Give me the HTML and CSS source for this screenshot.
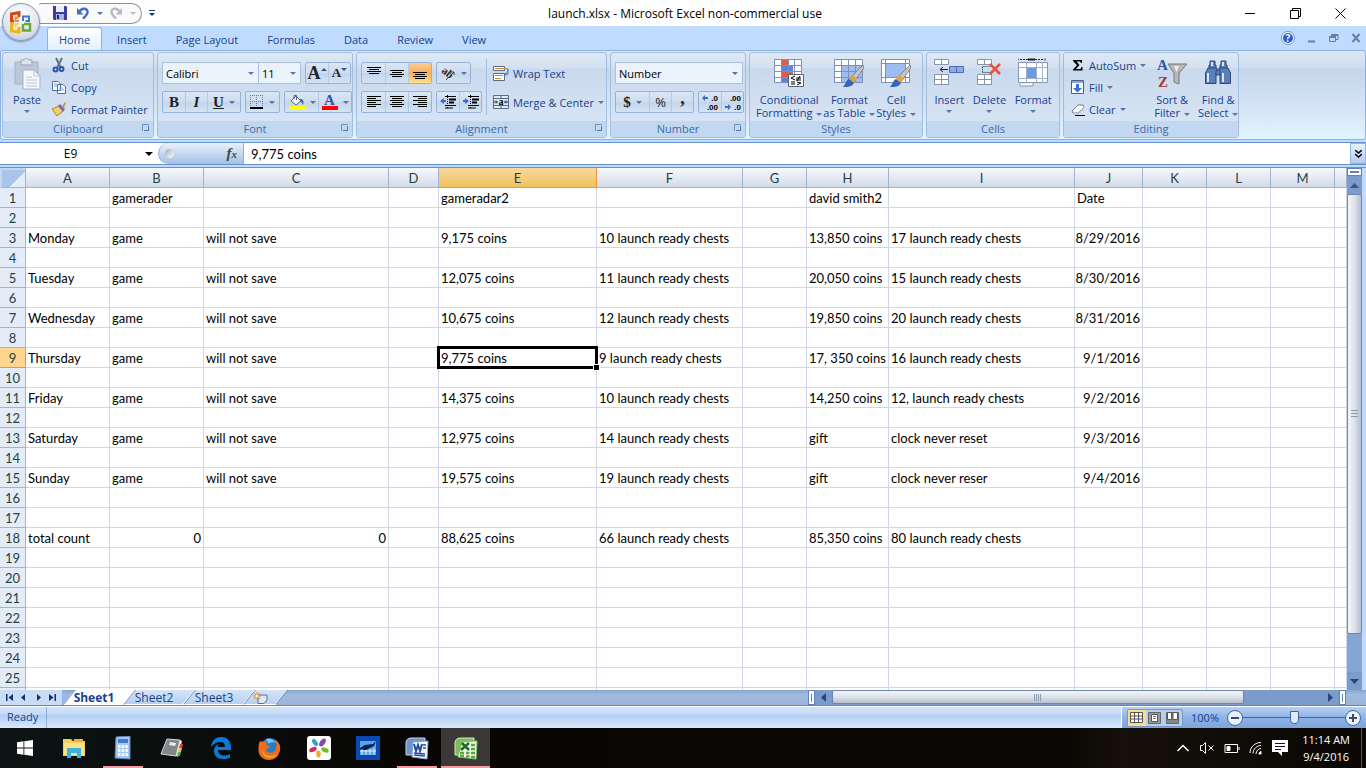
FILE: index.html
```html
<!DOCTYPE html>
<html lang="en">
<head>
	<meta charset="UTF-8">
	<meta name="viewport" content="width=device-width, initial-scale=1.0">
	<title>launch.xlsx - Microsoft Excel non-commercial use</title>
	<link rel="stylesheet" href="styles.css">
</head>
<body>
	<header class="title-bar">
		<button class="office-btn" aria-label="Office Button">
			<svg width="26" height="26" viewBox="0 0 26 26" fill="none" stroke-width="3">
				<path d="M6 12H3.500V5L11 3.500V8" stroke="#d2461a"/>
				<path d="M11 12H7.500V8.500H11" stroke="#e8902c" stroke-width="2"/>
				<path d="M15 12V7.500H21V12H17.500" stroke="#3c7cc8" stroke-width="2"/>
				<path d="M6 15H3.500V22L11 23V18" stroke="#f0b41c"/>
				<path d="M10.500 15H7.500V18" stroke="#f6d052" stroke-width="2"/>
				<path d="M15 15V21.500H22V15H16" stroke="#6aa83c" stroke-width="2.500"/>
			</svg>
		</button>
		<div class="quick-bar">
			<button aria-label="Save"><svg width="14" height="14" viewBox="0 0 14 14"><path d="M0 0H13L14 1V14H1L0 13Z" fill="#3c3ca0"/><path d="M3 0H11V6H3Z" fill="#e8eefa"/><path d="M3 8H11V14H3Z" fill="#a8b4dc"/><path d="M4 9H6V13H4Z" fill="#23236e"/></svg></button>
			<button aria-label="Undo"><svg width="14" height="14" viewBox="0 0 14 14" fill="none"><path d="M3 6C6 1 12 2 11.500 6.500C11.300 9 9 10.500 7 12.500" stroke="#3f6fc4" stroke-width="2.500"/><path d="M1 2V8.500H7.500Z" fill="#3f6fc4"/></svg><i class="caret"></i></button>
			<button aria-label="Redo"><svg width="14" height="14" viewBox="0 0 14 14" fill="none"><path d="M11 6C8 1 2 2 2.500 6.500C2.700 9 5 10.500 7 12.500" stroke="#b4bac6" stroke-width="2.500"/><path d="M13 2V8.500H6.500Z" fill="#b4bac6"/></svg><i class="caret caret-off"></i></button>
		</div>
		<button class="quick-more" aria-label="Customize Quick Access Toolbar"><i class="caret"></i></button>
		<h1>launch.xlsx - Microsoft Excel non-commercial use</h1>
		<div class="win-btns">
			<button aria-label="Minimize"><svg width="11" height="11" viewBox="0 0 11 11"><path d="M0 5.500H10" stroke="#000"/></svg></button>
			<button aria-label="Restore"><svg width="11" height="11" viewBox="0 0 11 11" fill="none" stroke="#000"><path d="M.5 2.500H8.500V10.500H.5ZM2.500 2.500V.5H10.500V8.500H8.500"/></svg></button>
			<button aria-label="Close"><svg width="11" height="11" viewBox="0 0 11 11" fill="none" stroke="#000"><path d="M.5 .5L10.500 10.500M10.500 .5L.5 10.500"/></svg></button>
		</div>
	</header>

	<nav class="tabs">
		<button class="tab tab-on">Home</button>
		<button class="tab">Insert</button>
		<button class="tab">Page Layout</button>
		<button class="tab">Formulas</button>
		<button class="tab">Data</button>
		<button class="tab">Review</button>
		<button class="tab">View</button>
		<div class="doc-btns">
			<button aria-label="Help"><svg width="14" height="14" viewBox="0 0 14 14"><circle cx="7" cy="7" r="6.500" fill="#fff" stroke="#6d94cf"/><circle cx="7" cy="7" r="5" fill="#2660c8"/><text x="7" y="11" text-anchor="middle" font-family="Open Sans, sans-serif" font-size="10" font-weight="bold" fill="#fff">?</text></svg></button>
			<button aria-label="Minimize window"><svg width="10" height="10" viewBox="0 0 10 10"><path d="M1 8.500H8" stroke="#6a7d9c" stroke-width="2"/></svg></button>
			<button aria-label="Restore window"><svg width="10" height="10" viewBox="0 0 10 10" fill="none" stroke="#6a7d9c"><path d="M.5 3.500H6.500V8.500H.5ZM2.500 3V1.500H9V6.500H7"/><path d="M.5 4H6.500M2.500 2H9" stroke-width="2"/></svg></button>
			<button aria-label="Close window"><svg width="10" height="10" viewBox="0 0 10 10"><path d="M1.500 1L8.500 9M8.500 1L1.500 9" stroke="#6a7d9c" stroke-width="2"/></svg></button>
		</div>
	</nav>

	<section class="ribbon">
		<div class="group group-clipboard">
			<div class="group-body">
				<button class="big">
					<svg width="27" height="32" viewBox="0 0 27 32"><path d="M1 4H24V26H1Z" fill="#bcc8d8" stroke="#a5b2c6"/><path d="M7 2H10C10 0 15 0 15 2H18V7H7Z" fill="#dde4ee" stroke="#94a3ba"/><path d="M9 12H20L26 18V31H9Z" fill="#f4f7fb" stroke="#a5b2c6"/><path d="M20 12V18H26M12 19H18M12 22H23M12 25H23M12 28H23" fill="none" stroke="#b9c4d6"/></svg>
					<span>Paste</span><i class="caret"></i>
				</button>
				<div class="stack">
					<button class="small"><svg width="16" height="16" viewBox="0 0 16 16" fill="none"><path d="M5 1L10 11M11 1L6 11" stroke="#62738f" stroke-width="2"/><circle cx="4.500" cy="12.500" r="2" stroke="#2b57a5" stroke-width="2"/><circle cx="10.500" cy="12" r="2" stroke="#2b57a5" stroke-width="2"/></svg>Cut</button>
					<button class="small"><svg width="16" height="16" viewBox="0 0 16 16" fill="#fff" stroke="#4a6fa8"><path d="M1.500 2.500H7L9.500 5V11.500H1.500ZM6.500 5.500H12L14.500 8V14.500H6.500Z"/><path d="M3 5H6M3 7H6M8 9H12M8 11H13" stroke="#7ea0d6"/></svg>Copy</button>
					<button class="small"><svg width="16" height="16" viewBox="0 0 16 16"><path d="M1 8L8 5L12 10L6 15Z" fill="#f3cf66" stroke="#a78432"/><path d="M7 5L9 3L14 8L12 11Z" fill="#7d6cae"/><path d="M11 5L14 1L15 2L13 7Z" fill="#c79b45"/></svg>Format Painter</button>
				</div>
			</div>
			<h2>Clipboard<i class="launcher"></i></h2>
		</div>

		<div class="group group-font">
			<div class="group-body rows">
				<div class="row">
					<div class="combo">
						<select class="sel sel-font" aria-label="Font"><option>Calibri</option></select>
						<select class="sel sel-size" aria-label="Font size"><option>11</option></select>
					</div>
					<div class="set">
						<button aria-label="Grow font"><b class="glyph glyph-l">A</b><svg width="6" height="14" viewBox="0 0 6 14"><path d="M0 5L3 2L6 5Z" fill="#2f5597"/></svg></button>
						<button aria-label="Shrink font"><b class="glyph glyph-s">A</b><svg width="6" height="14" viewBox="0 0 6 14"><path d="M0 2L3 5L6 2Z" fill="#2f5597"/></svg></button>
					</div>
				</div>
				<div class="row">
					<div class="set">
						<button aria-label="Bold"><b class="glyph">B</b></button>
						<button aria-label="Italic"><b class="glyph glyph-i">I</b></button>
						<button class="wide" aria-label="Underline"><b class="glyph glyph-u">U</b><i class="caret"></i></button>
					</div>
					<div class="set">
						<button class="wide" aria-label="Borders"><svg width="14" height="14" viewBox="0 0 14 14" fill="none" stroke="#6e7a92"><path d="M.5 0V12M12.500 0V12M6.500 0V12M0 .5H13M0 6.500H13" stroke-dasharray="1 1"/><path d="M0 13H13" stroke="#000" stroke-width="2"/></svg><i class="caret"></i></button>
					</div>
					<div class="set">
						<button class="wide" aria-label="Fill color"><svg width="17" height="16" viewBox="0 0 17 16"><path d="M3 7L8 2L13 7L8 11Z" fill="#eef3fa" stroke="#52658a"/><path d="M6 5V1.500H8.500V6" fill="none" stroke="#52658a"/><path d="M12 5C15 5 16 7 15 11L13 7Z" fill="#2b57a5"/><path d="M1 12H17V16H1Z" fill="#ff0"/></svg><i class="caret"></i></button>
						<button class="wide" aria-label="Font color"><span class="font-color">A</span><i class="caret"></i></button>
					</div>
				</div>
			</div>
			<h2>Font<i class="launcher"></i></h2>
		</div>

		<div class="group group-align">
			<div class="group-body">
				<div class="rows">
					<div class="row">
						<div class="set">
							<button aria-label="Top align"><svg width="14" height="14" viewBox="0 0 14 14" stroke="#000"><path d="M0 1.500H14M2 3.500H12M0 5.500H14M2 7.500H12"/></svg></button>
							<button aria-label="Middle align"><svg width="14" height="14" viewBox="0 0 14 14" stroke="#000"><path d="M0 4.500H14M2 6.500H12M0 8.500H14M2 10.500H12"/></svg></button>
							<button class="on" aria-label="Bottom align"><svg width="14" height="14" viewBox="0 0 14 14" stroke="#000"><path d="M0 6.500H14M2 8.500H12M0 10.500H14M2 12.500H12"/></svg></button>
						</div>
						<div class="set">
							<button class="wide" aria-label="Orientation"><svg width="16" height="16" viewBox="0 0 16 16"><text x="1" y="9" transform="rotate(40 4 8)" font-family="Liberation Serif, serif" font-size="11" font-weight="bold" fill="#222">ab</text><path d="M6 15L14 7M14 10V7H11" fill="none" stroke="#444"/></svg><i class="caret"></i></button>
						</div>
					</div>
					<div class="row">
						<div class="set">
							<button aria-label="Align left"><svg width="14" height="14" viewBox="0 0 14 14" stroke="#000"><path d="M0 1.500H14M0 3.500H9M0 5.500H14M0 7.500H9M0 9.500H14M0 11.500H9"/></svg></button>
							<button aria-label="Center"><svg width="14" height="14" viewBox="0 0 14 14" stroke="#000"><path d="M0 1.500H14M2 3.500H12M0 5.500H14M2 7.500H12M0 9.500H14M2 11.500H12"/></svg></button>
							<button aria-label="Align right"><svg width="14" height="14" viewBox="0 0 14 14" stroke="#000"><path d="M0 1.500H14M5 3.500H14M0 5.500H14M5 7.500H14M0 9.500H14M5 11.500H14"/></svg></button>
						</div>
						<div class="set">
							<button aria-label="Decrease indent"><svg width="16" height="14" viewBox="0 0 16 14" stroke="#000"><path d="M5 1.500H16M5 10.500H16M5 13H13"/><path d="M9 4.500H16M9 7.500H14" stroke-width="2"/><path d="M7.500 0V14" stroke-dasharray="1 1"/><path d="M0 6L4 3V5H6V7H4V9Z" fill="#3c6cc8" stroke="none"/></svg></button>
							<button aria-label="Increase indent"><svg width="16" height="14" viewBox="0 0 16 14" stroke="#000"><path d="M5 1.500H16M5 10.500H16M5 13H13"/><path d="M9 4.500H16M9 7.500H14" stroke-width="2"/><path d="M7.500 0V14" stroke-dasharray="1 1"/><path d="M6 6L2 3V5H0V7H2V9Z" fill="#3c6cc8" stroke="none"/></svg></button>
						</div>
					</div>
				</div>
				<div class="rows-text">
					<button class="small"><svg width="16" height="16" viewBox="0 0 16 16" fill="#fff" stroke="#5b6c88"><path d="M.5 1.500H11.500V5.500H.5ZM.5 8.500H11.500V15.500H.5Z"/><path d="M2 3.500H14.500V7M2 10.500H10M2 13.500H8" fill="none" stroke="#c08a4a"/><path d="M15 4V9H12M13.500 7.500L12 9L13.500 10.500" fill="none" stroke="#3f6fc4"/></svg>Wrap Text</button>
					<button class="small"><svg width="16" height="16" viewBox="0 0 16 16"><path d="M.5 1.500H15.500V14.500H.5ZM.5 4.500H15.500M.5 11.500H15.500M8 1.500V4M8 12V14" fill="#dfe8f5" stroke="#5b6c88"/><path d="M1 8H4M15 8H12M3 6.500L4.500 8L3 9.500M13 6.500L11.500 8L13 9.500" fill="none" stroke="#222"/><text x="8" y="11" text-anchor="middle" font-family="Liberation Serif, serif" font-size="10" font-weight="bold">a</text></svg>Merge &amp; Center<i class="caret"></i></button>
				</div>
			</div>
			<h2>Alignment<i class="launcher"></i></h2>
		</div>

		<div class="group group-number">
			<div class="group-body rows">
				<div class="row">
					<select class="sel sel-number" aria-label="Number format"><option>Number</option></select>
				</div>
				<div class="row">
					<div class="set">
						<button class="wide" aria-label="Accounting format"><b class="glyph">$</b><i class="caret"></i></button>
						<button aria-label="Percent style"><span class="glyph glyph-pct">%</span></button>
						<button aria-label="Comma style"><b class="glyph glyph-comma">,</b></button>
					</div>
					<div class="set">
						<button aria-label="Increase decimal"><svg width="18" height="18" viewBox="0 0 18 18" font-family="Liberation Sans, sans-serif" font-size="8" font-weight="bold"><path d="M1 5L4 2V4H7V6H4V8Z" fill="#3c6cc8"/><text x="17" y="8" text-anchor="end">.0</text><text x="17" y="17" text-anchor="end">.00</text></svg></button>
						<button aria-label="Decrease decimal"><svg width="18" height="18" viewBox="0 0 18 18" font-family="Liberation Sans, sans-serif" font-size="8" font-weight="bold"><path d="M7 14L4 11V13H1V15H4V17Z" fill="#3c6cc8"/><text x="17" y="8" text-anchor="end">.00</text><text x="17" y="17" text-anchor="end">.0</text></svg></button>
					</div>
				</div>
			</div>
			<h2>Number<i class="launcher"></i></h2>
		</div>

		<div class="group group-styles">
			<div class="group-body">
				<button class="big">
					<svg width="30" height="30" viewBox="0 0 30 30"><path d="M.5 1.500H27.500V24.500H.5Z" fill="#fff"/><path d="M7 1H14V7H7ZM7 13H19V19H7Z" fill="#e65a46"/><path d="M7 7H19V13H7ZM7 19H14V25H7Z" fill="#5b86dc"/><path d="M.5 1.500H27.500V24.500H.5ZM.5 7.500H27.500M.5 13.500H27.500M.5 19.500H27.500M7.500 1V25M14.500 1V25M20.500 1V25" fill="none" stroke="#7d90b8"/><path d="M14.500 16.500H29.500V28.500H14.500Z" fill="#fff" stroke="#55627d"/><path d="M21 18L17 20L21 22M17 24H21M17 26H21M22 20H27M22 22H27M26 18L23 23M23 24L27 25L23 27" fill="none" stroke="#000"/></svg>
					<span>Conditional<br>Formatting<i class="caret"></i></span>
				</button>
				<button class="big">
					<svg width="30" height="30" viewBox="0 0 30 30"><path d="M.5 1.500H28.500V24.500H.5Z" fill="#fff"/><path d="M7 7H29V25H7Z" fill="#9dbcf0"/><path d="M.5 1.500H28.500V24.500H.5ZM.5 7.500H28.500M.5 13.500H28.500M.5 19.500H28.500M7.500 1V25M14.500 1V25M21.500 1V25" fill="none" stroke="#7d90b8"/><path d="M29 7L30 10L22 21L18 18Z" fill="#c8c4c0" stroke="#6c6a6c" stroke-width=".7"/><path d="M18 17L23 21L20 25L15 21Z" fill="#e3a04a"/><path d="M15 21L20 25C18 29 14 29 9 29C12 26 12 22 15 21Z" fill="#3566b4"/></svg>
					<span>Format<br>as Table<i class="caret"></i></span>
				</button>
				<button class="big">
					<svg width="30" height="30" viewBox="0 0 30 30"><path d="M.5 1.500H28.500V24.500H.5Z" fill="#fff" stroke="#7d90b8"/><path d="M5 6H24V20H5Z" fill="#9dbcf0"/><path d="M.5 5.500H28.500M.5 19.500H28.500M4.500 1V25M24.500 1V25" fill="none" stroke="#7d90b8"/><path d="M29 7L30 10L22 21L18 18Z" fill="#c8c4c0" stroke="#6c6a6c" stroke-width=".7"/><path d="M18 17L23 21L20 25L15 21Z" fill="#e3a04a"/><path d="M15 21L20 25C18 29 14 29 9 29C12 26 12 22 15 21Z" fill="#3566b4"/></svg>
					<span>Cell<br>Styles<i class="caret"></i></span>
				</button>
			</div>
			<h2>Styles</h2>
		</div>

		<div class="group group-cells">
			<div class="group-body">
				<button class="big">
					<svg width="30" height="30" viewBox="0 0 30 30" fill="#fff" stroke="#8594b0"><path d="M.5 1.500H14.500V6.500H.5ZM7.500 1V6M.5 16.500H14.500V26.500H.5ZM.5 21.500H14.500M7.500 16V26"/><path d="M15.500 8.500H29.500V14.500H15.500ZM22.500 8V14" fill="#8caee8" stroke="#4a6fb8"/><path d="M14 11.500H6M9 9L6 11.500L9 14" fill="none" stroke="#222"/></svg>
					<span>Insert</span><i class="caret"></i>
				</button>
				<button class="big">
					<svg width="30" height="30" viewBox="0 0 30 30" fill="#fff" stroke="#8594b0"><path d="M3.500 1.500H17.500V6.500H3.500ZM10.500 1V6M3.500 16.500H17.500V26.500H3.500ZM3.500 21.500H17.500M10.500 16V26"/><path d="M8.500 8.500H17.500M8.500 14.500H17.500M8.500 9V14" stroke="#333" stroke-dasharray="1 1"/><path d="M16 6L26 16M26 6L16 16" stroke="#e8503c" stroke-width="2.500"/></svg>
					<span>Delete</span><i class="caret"></i>
				</button>
				<button class="big">
					<svg width="30" height="30" viewBox="0 0 30 30" fill="#fff" stroke="#8594b0"><path d="M.5 4.500H29.500V24.500H.5ZM2 26V28H15V25"/><path d="M9 10H18V20H9Z" fill="#6f98e2" stroke="none"/><path d="M.5 9.500H29.500M.5 20.500H29.500M8.500 4V25M18.500 4V25M24.500 4V25" fill="none" stroke="#9fb0cc"/><path d="M0 .5V3M27 .5V3M2 1.500H25" stroke="#222" stroke-dasharray="2 1"/><path d="M10 1.500H17" stroke="#222" stroke-width="2"/></svg>
					<span>Format</span><i class="caret"></i>
				</button>
			</div>
			<h2>Cells</h2>
		</div>

		<div class="group group-editing">
			<div class="group-body">
				<div class="stack">
					<button class="small"><svg width="14" height="14" viewBox="0 0 14 14"><path d="M2 2H11V5H10L9 3.500H5.500L8.500 7L5 11H9.500L10.500 9H11.500V12.500H2V11.500L6 7.200L2 3Z" fill="#000"/></svg>AutoSum<i class="caret"></i></button>
					<button class="small"><svg width="14" height="14" viewBox="0 0 14 14"><path d="M.5 .5H12.500V13.500H.5Z" fill="#fff" stroke="#4b5f8c"/><path d="M1 1H12V3H1Z" fill="#8ba4d4"/><path d="M5 4H8V8H11L6.500 12.500L2 8H5Z" fill="#3a6fd8"/></svg>Fill<i class="caret"></i></button>
					<button class="small"><svg width="14" height="14" viewBox="0 0 14 14"><path d="M1 9L7 3H12L13 5L7 11H2Z" fill="#fff" stroke="#6f7b90"/><path d="M2 11H7L13 5V8L7 13H3Z" fill="#c5ccd8"/><path d="M4 13.500H14" stroke="#000"/></svg>Clear<i class="caret"></i></button>
				</div>
				<button class="big">
					<svg width="30" height="30" viewBox="0 0 30 30"><text x="0" y="12" font-family="Liberation Serif, serif" font-size="15" font-weight="bold" fill="#2f55a4">A</text><text x="1" y="29" font-family="Liberation Serif, serif" font-size="15" font-weight="bold" fill="#a63a3a">Z</text><path d="M11 6H30L22 15V26L17 24V15Z" fill="#b9b9b9" stroke="#777"/><path d="M17 8H22L19.500 14Z" fill="#eee"/></svg>
					<span>Sort &amp;<br>Filter<i class="caret"></i></span>
				</button>
				<button class="big">
					<svg width="30" height="30" viewBox="0 0 30 30" fill="#5c7fb8" stroke="#2d4878"><path d="M7 3H12V7H13V13H6V7H7ZM18 3H23V7H24V13H17V7H18Z"/><path d="M5 10H14V15H13V25.500H2.500V15ZM16 10H25L27.500 15V25.500H17V15H16Z"/><path d="M13 12H17V17H13Z"/><path d="M5 15V24M20 15V24M9 4V8M20 4V8" stroke="#dbe6f8" stroke-width="2"/></svg>
					<span>Find &amp;<br>Select<i class="caret"></i></span>
				</button>
			</div>
			<h2>Editing</h2>
		</div>
	</section>

	<section class="formula-bar">
		<div class="name-box">
			<input type="text" value="E9" aria-label="Name Box">
			<i class="caret"></i>
		</div>
		<div class="fx-area">
			<i class="knob"></i>
			<button class="fx" aria-label="Insert Function">f<small>x</small></button>
		</div>
		<input class="formula" type="text" value="9,775 coins" aria-label="Formula Bar">
		<button class="expand" aria-label="Expand Formula Bar"><svg width="7" height="8" viewBox="0 0 7 8" fill="none" stroke="#000" stroke-width="1.500"><path d="M0 0L3.500 3L7 0M0 4L3.500 7L7 4"/></svg></button>
	</section>

	<main class="sheet-area">
		<div class="sheet">
			<table class="grid"></table>
		</div>
		<div class="v-scroll">
			<i class="split-h"></i>
			<button aria-label="Scroll up"><svg width="9" height="5" viewBox="0 0 9 5"><path d="M0 5L4.500 0L9 5Z" fill="#3c5580"/></svg></button>
			<i class="thumb"></i>
			<button aria-label="Scroll down"><svg width="9" height="5" viewBox="0 0 9 5"><path d="M0 0L4.500 5L9 0Z" fill="#2b4676"/></svg></button>
		</div>
	</main>

	<section class="sheet-bar">
		<div class="sheet-nav">
			<button aria-label="First sheet"><svg width="7" height="7" viewBox="0 0 7 7"><path d="M0 0H1.500V7H0ZM7 0V7L2.500 3.500Z" fill="#15306a"/></svg></button>
			<button aria-label="Previous sheet"><svg width="7" height="7" viewBox="0 0 7 7"><path d="M5 0V7L1 3.500Z" fill="#15306a"/></svg></button>
			<button aria-label="Next sheet"><svg width="7" height="7" viewBox="0 0 7 7"><path d="M2 0V7L6 3.500Z" fill="#15306a"/></svg></button>
			<button aria-label="Last sheet"><svg width="7" height="7" viewBox="0 0 7 7"><path d="M7 0H5.500V7H7ZM0 0V7L4.500 3.500Z" fill="#15306a"/></svg></button>
		</div>
		<div class="sheet-tabs">
			<button class="sheet-tab sheet-tab-on">Sheet1</button>
			<button class="sheet-tab">Sheet2</button>
			<button class="sheet-tab">Sheet3</button>
			<button class="sheet-tab sheet-tab-new" aria-label="Insert Worksheet"><svg width="15" height="12" viewBox="0 0 15 12"><path d="M5 3H14V8L11 11.500H5Z" fill="#dfe7f3" stroke="#5a6c92"/><path d="M4 0V8M0 4H8M1 1L7 7M7 1L1 7" stroke="#d98a28"/><circle cx="4" cy="4" r="1.500" fill="#fff3b8"/></svg></button>
		</div>
		<div class="h-scroll">
			<i class="split-v"></i>
			<button aria-label="Scroll left"><svg width="5" height="9" viewBox="0 0 5 9"><path d="M5 0V9L0 4.500Z" fill="#2b4676"/></svg></button>
			<div class="track"><i class="thumb"></i></div>
			<button aria-label="Scroll right"><svg width="5" height="9" viewBox="0 0 5 9"><path d="M0 0V9L5 4.500Z" fill="#2b4676"/></svg></button>
			<i class="split-v"></i>
		</div>
	</section>

	<section class="status-bar">
		<span class="ready">Ready</span>
		<div class="status-right">
			<div class="views">
				<button class="on" aria-label="Normal"><svg width="14" height="12" viewBox="0 0 14 12" fill="#fff" stroke="#555"><path d="M.5 .5H12.500V10.500H.5ZM.5 4H12.500M.5 7H12.500M4.500 .5V10M8.500 .5V10"/></svg></button>
				<button aria-label="Page Layout"><svg width="14" height="12" viewBox="0 0 14 12"><path d="M.5 .5H12.500V11.500H.5Z" fill="#999" stroke="#666"/><path d="M3.500 2.500H9.500V9.500H3.500Z" fill="#fff" stroke="#555"/><path d="M5 4.500H8M5 6.500H8" stroke="#777"/></svg></button>
				<button aria-label="Page Break Preview"><svg width="14" height="12" viewBox="0 0 14 12"><path d="M.5 .5H12.500V11.500H.5Z" fill="#888" stroke="#666"/><path d="M1.500 .5H5.500V7.500H1.500ZM7 .5H11.500V7.500H7Z" fill="#fff" stroke="#555"/></svg></button>
			</div>
			<button class="zoom-value">100%</button>
			<button class="round" aria-label="Zoom out"><svg width="8" height="8" viewBox="0 0 8 8"><path d="M0 4H8" stroke="#3c4a66" stroke-width="2"/></svg></button>
			<input class="zoom" type="range" min="0" max="200" value="100" aria-label="Zoom">
			<button class="round" aria-label="Zoom in"><svg width="8" height="8" viewBox="0 0 8 8"><path d="M0 4H8M4 0V8" stroke="#3c4a66" stroke-width="2"/></svg></button>
		</div>
	</section>

	<footer class="taskbar">
		<button aria-label="Start"><svg width="16" height="16" viewBox="0 0 16 16" fill="#fff"><path d="M0 2.200L6.500 1.300V7.600H0ZM7.300 1.200L16 0V7.600H7.300ZM0 8.400H6.500V14.700L0 13.800ZM7.300 8.400H16V16L7.300 14.800Z"/></svg></button>
		<button aria-label="File Explorer"><svg width="22" height="20" viewBox="0 0 22 20"><path d="M0 1H8L10 3H22V18H0Z" fill="#f4cf5f"/><path d="M11 1H20V4H11Z" fill="#e8b63c"/><path d="M1 5H21V17H1Z" fill="#fbe08a"/><path d="M4 20V10H18V20H14V15H8V20Z" fill="#3bb3e0"/></svg></button>
		<button class="open" aria-label="Calculator"><svg width="18" height="24" viewBox="0 0 18 24"><path d="M2 1L16 0V23L1 22Z" fill="#a9c8ee" stroke="#5d86c4"/><path d="M4 3H14V7H4Z" fill="#3f7cd0"/><path d="M4 10.500H14M4 14.500H14M4 18.500H14" stroke="#f4f8ff" stroke-width="3" stroke-dasharray="2.500 1.200"/></svg></button>
		<button aria-label="Notebook"><svg width="24" height="22" viewBox="0 0 24 22"><path d="M7 2L20 3L16 19L1 17Z" fill="#83878a" stroke="#d8d8d8"/><path d="M20 3L22 4L18 20L16 19Z" fill="#eee"/><path d="M20 7H23L22 11H19Z" fill="#e04a34"/><path d="M19 11H22L21 15H18Z" fill="#f5c02c"/><path d="M18 15H21L20 19H17Z" fill="#54b14a"/><path d="M10 5L16 6L15 9L9 8Z" fill="#ececec"/></svg></button>
		<button aria-label="Edge"><svg width="22" height="22" viewBox="0 0 22 22"><path d="M1 10C2 3 6 0 11 0C18 0 21 5 21 10V13H8C8 17 11 18.500 14 18.500C16.500 18.500 18.500 18 20 17V20.500C18 21.500 16 22 13 22C7 22 4 18.500 4 14C4 10.500 6 8 9 7C8 8 7.500 9 7.500 10H15C15 6.500 13.500 5 10.500 5C6.500 5 3 7 1 10Z" fill="#0a7ad8"/></svg></button>
		<button aria-label="Firefox"><svg width="23" height="23" viewBox="0 0 23 23"><circle cx="12" cy="11" r="10" fill="#2a7cc4"/><path d="M8 2C13 1 16 3 17 6C14 4 12 5 11 7Z" fill="#7cc8f0"/><path d="M2 4L5 5L9 4L8 8L12 9C11 12 8 11 8 13C9 17 17 17 18 11C19 8 18 5 17 3C21 5 23 9 22 13C21 19 17 23 11 23C4 23 0 18 .5 12C.5 8 1 6 2 4Z" fill="#ec6d1c"/><path d="M4 13C6 19 13 21 19 17C15 23 4 22 4 13Z" fill="#f8b02c"/></svg></button>
		<button aria-label="Photos"><svg width="24" height="24" viewBox="0 0 24 24"><rect width="24" height="24" rx="3" fill="#fff"/><ellipse cx="8" cy="6.500" rx="2.200" ry="4" transform="rotate(-35 8 6.500)" fill="#2aa2dc"/><ellipse cx="15.500" cy="6.500" rx="2.500" ry="4.500" transform="rotate(35 15.500 6.500)" fill="#8e44ad"/><ellipse cx="18" cy="14" rx="4" ry="2.300" transform="rotate(25 18 14)" fill="#7ab82c"/><ellipse cx="11.500" cy="18" rx="2.200" ry="3.500" fill="#f5a623"/><ellipse cx="6" cy="13.500" rx="4" ry="2.200" transform="rotate(-25 6 13.500)" fill="#e0245e"/></svg></button>
		<button aria-label="Flight"><svg width="24" height="24" viewBox="0 0 24 24"><path d="M0 0H24V24H0Z" fill="#0a48b4"/><path d="M4 5H20V19H4Z" fill="#5aa6e4"/><path d="M4 12L9 9L17 8L20 5L18 10L10 14L4 14Z" fill="#0b1f5c"/><path d="M4 15H20M6 13V19M10 14V19M14 13V19M18 12V19" stroke="#dff0ff"/></svg></button>
		<button class="open" aria-label="Word"><svg width="24" height="23" viewBox="0 0 24 23"><path d="M6 1H20V18H1V6C1 3 3 1 6 1Z" fill="#6d92cc" stroke="#c4d6f0"/><path d="M8 5L23 4L22 22L7 20Z" fill="#f4f8ff" stroke="#8aa6d4"/><path d="M9 7L11 14L13 8L15 14L17 7" fill="none" stroke="#23509c" stroke-width="2"/><path d="M18 8H21M18 11H21M9 16L20 17M9 18L20 19" stroke="#23509c" stroke-width="1.500"/></svg></button>
		<button class="open active" aria-label="Excel"><svg width="24" height="23" viewBox="0 0 24 23"><path d="M6 1H20V18H1V6C1 3 3 1 6 1Z" fill="#7fbb5c" stroke="#d0ecc0"/><path d="M8 5L23 4L22 22L4 20Z" fill="#f1f9ec" stroke="#8cc070"/><path d="M8 6L15 13M15 6L7 13" stroke="#1f6b26" stroke-width="2.500"/><path d="M17 8H21M17 12H21M6 16H10M12 16H15.500M17 16H21M6 19H10M12 19.500H15.500M17 20H21" stroke="#5aa63c" stroke-width="2.500"/></svg></button>
		<div class="tray">
			<button aria-label="Show hidden icons"><svg width="14" height="14" viewBox="0 0 14 14"><path d="M1.500 10L7 4.500L12.500 10" fill="none" stroke="#fff" stroke-width="1.500"/></svg></button>
			<button aria-label="Volume muted"><svg width="16" height="14" viewBox="0 0 16 14" fill="none" stroke="#fff"><path d="M1.500 4.500H3.500L6.500 1.500V12.500L3.500 9.500H1.500ZM9.500 4.500L14.500 9.500M14.500 4.500L9.500 9.500"/></svg></button>
			<button aria-label="Battery"><svg width="16" height="14" viewBox="0 0 16 14" fill="none" stroke="#fff"><path d="M1 3.500H13.500V11.500H1ZM15 6V9"/><path d="M3 5.500H6V9.500H3Z" fill="#fff"/></svg></button>
			<button aria-label="Network"><svg width="14" height="14" viewBox="0 0 14 14" fill="none" stroke="#fff"><path d="M1 12C1 6 6 1.500 12 1.500M4 12.500C4 8 8 4.500 12 4.500M7 13C7 10 9.500 7.500 12 7.500"/><path d="M10 13C10 11.500 11 10.500 12 10.500V13Z" fill="#fff"/></svg></button>
			<button aria-label="Notifications"><svg width="16" height="16" viewBox="0 0 16 16"><path d="M0 0H16V12H10V16L6 12H0Z" fill="#fff"/><path d="M3 3.500H13M3 6.500H13M3 9.500H9" stroke="#111"/></svg></button>
			<button class="clock">11:14 AM<br>9/4/2016</button>
			<i class="peek"></i>
		</div>
	</footer>
	<script src="script.js"></script>
</body>
</html>
```
FILE: styles.css
```css
*{margin: 0; padding: 0; box-sizing: border-box;}
body{display: flex; flex-direction: column; height: 100vh; overflow: hidden; background: #bfdbff; font-family: "Open Sans", "Noto Sans", sans-serif; font-size: 11px; color: #15428b;}
button, input, select{font: inherit; color: inherit; background: none; border: 0; border-radius: 0; outline: 0;}
button{display: flex; align-items: center; justify-content: center; white-space: nowrap;}
svg{display: block; flex: none;}
h1, h2{font-weight: normal; font-size: 11px;}

.caret{display: inline-block; flex: none; width: 0; height: 0; border: 3px solid transparent; border-top-color: #5577ab; border-bottom: 0;}
.caret-off{border-top-color: #b4bac6;}

/* title bar */
.title-bar{display: flex; align-items: center; flex: none; height: 26px; padding-left: 38px; padding-right: 3px; background: #fff; position: relative;}
.title-bar h1{flex: 1; padding-right: 15px; text-align: center; color: #000; font-size: 12px;}
.office-btn{position: absolute; left: 2px; top: 3px; z-index: 2; width: 38px; height: 38px; border-radius: 50%; border: 1px solid #8c9ab0; background: radial-gradient(circle at 50% 30%, #fff, #dfe4ec 60%, #b9c3d4); box-shadow: 0 1px 2px #6f87ad;}
.quick-bar{display: flex; align-items: center; gap: 6px; width: 104px; height: 21px; padding-left: 14px; border: 1px solid #8a8f99; border-left-color: transparent; border-radius: 4px 11px 11px 0; background: #fafafa;}
.quick-bar button{gap: 7px;}
.quick-bar button:first-child{margin-right: 3px;}
.quick-more{width: 10px; margin-left: 5px; padding-top: 3px; position: relative;}
.quick-more::before{content: ""; position: absolute; top: 0; left: 2px; width: 6px; height: 1px; background: #15428b;}
.quick-more .caret{border-top-color: #15306a;}
.win-btns{display: flex;}
.win-btns button{width: 45px; height: 24px;}

/* tabs */
.tabs{display: flex; align-items: flex-end; gap: 1px; flex: none; height: 24px; padding-left: 47px; background: #bfdbff;}
.tab{height: 23px; padding: 0 13px; border: 1px solid transparent; border-bottom: 0;}
.tab-on{padding: 0 11px; border-color: #8db2e3; border-radius: 3px 3px 0 0; background: linear-gradient(#fff, #e4eefa);}
.doc-btns{display: flex; align-items: center; gap: 12px; height: 24px; margin-left: auto; padding-right: 5px;}

/* ribbon */
.ribbon{display: flex; gap: 3px; flex: none; height: 90px; padding: 1px; border: 1px solid #8db2e3; border-radius: 3px; background: linear-gradient(#dbe6f4, #cfdef0 17px, #c5d6eb 18px, #d7e6f7 70%, #e0f4ff);}
.group{display: flex; flex-direction: column; flex: none; border: 1px solid #a3bfdf; border-radius: 3px; overflow: hidden; background: linear-gradient(#dfe9f5, #d3e0f0 15px, #c9d9ed 16px, #dae7f6);}
.group h2{flex: none; height: 16px; line-height: 15px; text-align: center; color: #3e6aaa; background: #c1d8f0; position: relative;}
.group-body{display: flex; flex: 1;}
.launcher{position: absolute; right: 4px; top: 3px; width: 7px; height: 7px; border: 1px solid #7293c2; border-right: 0; border-bottom: 0;}
.launcher::after{content: ""; position: absolute; right: 0; bottom: 0; width: 4px; height: 4px; border: 1px solid #5577ab; border-left: 0; border-top: 0;}
.group-clipboard{width: 152px;}
.group-font{width: 196px;}
.group-align{width: 251px;}
.group-number{width: 136px;}
.group-styles{width: 174px;}
.group-cells{width: 134px;}
.group-editing{width: 176px;}

.big{flex-direction: column; justify-content: flex-start; padding-top: 5px; line-height: 13px; text-align: center;}
.big svg{margin-bottom: 5px;}
.big > .caret{margin-top: 4px;}
.big span .caret{margin-left: 4px; vertical-align: middle;}
.stack{display: flex; flex-direction: column; align-items: flex-start; padding-top: 1px;}
.small{gap: 4px; height: 22px;}
.group-clipboard .big{width: 48px;}
.group-clipboard .big svg{margin-bottom: 3px;}
.group-styles .group-body{justify-content: space-between; padding: 0 6px;}
.group-cells .group-body{justify-content: space-around; padding: 0 3px;}
.group-editing .group-body{gap: 8px; padding-left: 7px;}
.group-editing .stack{width: 76px;}

.rows{display: flex; flex-direction: column; gap: 7px; padding: 9px 0 0 4px;}
.row{display: flex; gap: 4px;}
.combo{display: flex;}
.sel{height: 22px; padding: 0 3px; appearance: none; border: 1px solid #abc1de; color: #000; background: #eaf2fb url("data:image/svg+xml,%3Csvg xmlns='http://www.w3.org/2000/svg' width='6' height='3'%3E%3Cpath d='M0 0H6L3 3Z' fill='%235577ab'/%3E%3C/svg%3E") no-repeat right 4px center;}
.sel-font{width: 97px;}
.sel-size{width: 42px; border-left: 0;}
.sel-number{width: 128px;}
.set{display: flex; height: 22px; border: 1px solid #96b2d7; border-radius: 2px; background: linear-gradient(#d9e6f5, #cddcef 50%, #c3d5eb 51%, #d5e4f5);}
.set button{width: 22px; border-left: 1px solid #b3c9e4;}
.set button:first-child{border-left: 0;}
.set .wide{width: 33px; gap: 5px;}
.set .on{background: linear-gradient(#f9cf9c, #fdad52 50%, #fde28c);}
.group-align .set button:not(.wide){width: 23px;}
.group-align .set + .set button:not(.wide){width: 22px;}
.glyph{font-family: "Liberation Serif", serif; font-size: 15px; line-height: 20px; color: #222;}
.glyph-l{font-size: 18px;}
.glyph-s{font-size: 13px;}
.glyph-i{font-style: italic;}
.glyph-u{text-decoration: underline;}
.glyph-pct{font-family: "Open Sans", sans-serif; font-size: 13px;}
.glyph-comma{padding-bottom: 8px; font-size: 18px;}
.font-color{width: 16px; height: 16px; line-height: 13px; border-bottom: 4px solid #f00; font-family: "Liberation Serif", serif; font-size: 15px; font-weight: bold; color: #2f55a4;}
.rows-text{display: flex; flex-direction: column; align-items: flex-start; gap: 7px; margin: 6px 0 6px 4px; padding: 3px 0 0 6px; border-left: 1px solid #a3bfdf;}

/* formula bar */
.formula-bar{display: flex; flex: none; height: 23px; margin-top: 2px; border: 1px solid #6593cf; border-left: 0; border-right: 0; background: #fff; color: #000;}
.name-box{display: flex; align-items: center; flex: none; width: 158px; padding-right: 5px;}
.name-box input{width: 145px; padding-right: 4px; text-align: center; font-size: 12px;}
.name-box .caret{border-width: 4px; border-bottom: 0; border-top-color: #000;}
.fx-area{display: flex; align-items: center; justify-content: space-between; flex: none; width: 86px; padding: 0 6px 0 6px; border: 1px solid #8db2e3; border-width: 0 1px; border-radius: 11px 0 0 11px; background: linear-gradient(#e9f1fb, #a3bfe6);}
.knob{width: 9px; height: 9px; border-radius: 50%; background: linear-gradient(135deg, #9fa9b8, #fff);}
.fx{font-family: "Liberation Serif", serif; font-style: italic; font-weight: bold; font-size: 15px; color: #444;}
.fx small{font-size: 11px;}
.formula{flex: 1; min-width: 0; padding-left: 7px; font-family: Lato, sans-serif; font-size: 13px;}
.expand{width: 16px; border: 1px solid #8db2e3; background: linear-gradient(#eaf2fc, #b3cbee);}

/* worksheet */
.sheet-area{display: flex; flex: 1; min-height: 0; margin-top: 2px; border-top: 1px solid #6593cf;}
.sheet{flex: 1; min-width: 0; overflow: hidden; background: #fff;}
.grid{width: 100%; table-layout: fixed; border-collapse: separate; border-spacing: 0; font-family: Lato, "Noto Sans", sans-serif; font-size: 13px; color: #000;}
.grid tr{height: 20px;}
.grid th, .grid td{height: 20px; line-height: 18px; border: 1px solid #d0d7e5; border-width: 0 1px 1px 0; white-space: nowrap;}
.grid th{font-weight: normal; font-size: 13px; color: #27413e; border-color: #9eb6ce; text-align: center;}
.grid thead th{background: linear-gradient(#f7f9fc, #d3dbe9);}
.grid tbody th{background: #e4ecf7;}
.grid th.on{background: linear-gradient(#f9d99f, #f1c15f); border-color: #f29536;}
.grid tbody th.on{background: #ffd58d;}
.grid thead .corner{background: linear-gradient(135deg, #a9c4e9 62%, #e4ecf7 62%); border: 2px solid #c5d8f0; border-right: 1px solid #9eb6ce; border-bottom: 1px solid #9eb6ce;}
.grid td{padding-left: 2px;}
.grid .num{text-align: right; padding: 0 2px 0 0;}
.grid .cursor{position: relative;}
.cursor::before{content: ""; position: absolute; inset: -2px; border: 3px solid #000;}
.cursor::after{content: ""; position: absolute; right: -3px; bottom: -3px; width: 5px; height: 5px; background: #000; outline: 1px solid #fff;}

.v-scroll{display: flex; flex-direction: column; flex: none; width: 15px; margin-right: 4px; background: #86a5d2;}
.v-scroll button{height: 18px; background: #7b9bcb;}
.v-scroll .thumb{flex: 1; margin-bottom: 38px; border: 1px solid #6c87b4; border-radius: 2px; background: repeating-linear-gradient(#8d9ab0 0 1px, transparent 1px 3px) center / 7px 9px no-repeat, linear-gradient(90deg, #f3f5f8, #dde1e9 50%, #b7c0cf);}
.split-h{height: 8px; border: 1px solid #5d82bc; background: linear-gradient(#5d82bc, #5d82bc) center / 9px 2px no-repeat #fff;}

/* sheet tabs */
.sheet-bar{display: flex; flex: none; height: 16px; padding-right: 20px; border-bottom: 1px solid #5f86bd; background: linear-gradient(#86a5d2, #a0b9df 30%, #9bb4da);}
.sheet-nav{display: flex; flex: none; width: 63px; padding: 0 2px; background: #c9dcf6; border-right: 1px solid #8db2e3;}
.sheet-nav button{flex: 1;}
.sheet-tabs{display: flex; flex: 1;}
.sheet-tab{position: relative; z-index: 1; width: 60px; height: 15px; padding-left: 2px; font-size: 12px;}
.sheet-tab::before{content: ""; position: absolute; z-index: -1; inset: 0 -7px 0 7px; border-right: 1px solid #6f8fc0; border-bottom: 1px solid #fff; box-shadow: inset -1px 0 #fff; background: linear-gradient(#d5e4f8, #b8cff0); transform: skewX(-39deg);}
.sheet-tab-on{z-index: 2; font-weight: bold;}
.sheet-tab-on::before{background: #fff;}
.sheet-tab-new{width: 32px;}
.h-scroll{display: flex; flex: none; width: 40%; min-width: 200px;}
.h-scroll button{width: 17px; background: #7b9bcb;}
.track{flex: 1; background: #7b9bcb;}
.h-scroll .thumb{display: block; width: 84%; height: 14px; border: 1px solid #6c87b4; border-radius: 2px; background: repeating-linear-gradient(90deg, #8d9ab0 0 1px, transparent 1px 2px) center / 8px 7px no-repeat, linear-gradient(#f3f5f8, #dde1e9 50%, #b7c0cf);}
.split-v{flex: none; width: 7px; border: 1px solid #5d82bc; background: linear-gradient(#5d82bc, #5d82bc) center / 1px 8px no-repeat #fff;}

/* status bar */
.status-bar{display: flex; justify-content: space-between; flex: none; height: 22px; border-top: 1px solid #fff; background: linear-gradient(#d3e3f8, #c6dbf8 7px, #b0cdf4 8px, #d9e8fb);}
.ready{width: 47px; padding-left: 7px; line-height: 20px; border-right: 1px solid #8fb1e2;}
.status-right{display: flex; align-items: center; width: 245px; padding: 0 5px; border-left: 1px solid #fff; background: linear-gradient(#b5d0f4, #8fb3e6 50%, #7da5dc);}
.views{display: flex; flex: none; border: 1px solid #7497cc; border-radius: 2px; background: #b6cff0;}
.views button{width: 18px; height: 16px;}
.views .on{background: #fbdb8c;}
.zoom-value{flex: none; width: 44px;}
.round{flex: none; width: 16px; height: 16px; border: 1px solid #44639a; border-radius: 50%; background: #e9f1fb;}
.zoom{flex: 1; min-width: 0; height: 16px; appearance: none; background: linear-gradient(#44639a, #44639a) center / 100% 1px no-repeat;}
.zoom::-webkit-slider-thumb{appearance: none; width: 9px; height: 13px; border: 1px solid #44639a; border-radius: 1px 1px 5px 5px; background: #dfeafa;}

/* taskbar */
.taskbar{display: flex; flex: none; height: 40px; background: linear-gradient(90deg, #0c1414, #080605 30%, #0b0704 78%, #151009 82%, #0a0704); color: #fff;}
.taskbar > button{width: 49px; height: 40px; background: linear-gradient(transparent, transparent) bottom / 40px 2px no-repeat;}
.taskbar > .open{background-image: linear-gradient(#f59a9e, #f59a9e);}
.taskbar > .active{background-size: 100% 2px; background-color: #3c3838;}
.tray{display: flex; align-items: center; gap: 9px; margin-left: auto; padding-right: 4px;}
.clock{margin-left: 5px; line-height: 17px; text-align: center;}
.peek{width: 1px; height: 40px; margin-left: 2px; background: #55524f;}
```
FILE: script.js
```javascript
// column letter, width
var cols = [['A', 84], ['B', 94], ['C', 185], ['D', 50], ['E', 158], ['F', 146], ['G', 64], ['H', 82], ['I', 186], ['J', 68], ['K', 64], ['L', 64], ['M', 64], ['', 0]];
var rows = 26;
var active = 'E9';

var cells = {
	B1: 'gamerader', E1: 'gameradar2', H1: 'david smith2', J1: 'Date',
	A18: 'total count', B18: '0', C18: '0', E18: '88,625 coins', F18: '66 launch ready chests', H18: '85,350 coins', I18: '80 launch ready chests'
};

var days = [
	['Monday', '9,175 coins', '10 launch ready chests', '13,850 coins', '17 launch ready chests', '8/29/2016'],
	['Tuesday', '12,075 coins', '11 launch ready chests', '20,050 coins', '15 launch ready chests', '8/30/2016'],
	['Wednesday', '10,675 coins', '12 launch ready chests', '19,850 coins', '20 launch ready chests', '8/31/2016'],
	['Thursday', '9,775 coins', '9 launch ready chests', '17, 350 coins', '16 launch ready chests', '9/1/2016'],
	['Friday', '14,375 coins', '10 launch ready chests', '14,250 coins', '12, launch ready chests', '9/2/2016'],
	['Saturday', '12,975 coins', '14 launch ready chests', 'gift', 'clock never reset', '9/3/2016'],
	['Sunday', '19,575 coins', '19 launch ready chests', 'gift', 'clock never reser', '9/4/2016']
];

days.forEach(function(d, i) {
	var r = 3 + i * 2;
	cells['A' + r] = d[0];
	cells['B' + r] = 'game';
	cells['C' + r] = 'will not save';
	cells['E' + r] = d[1];
	cells['F' + r] = d[2];
	cells['H' + r] = d[3];
	cells['I' + r] = d[4];
	cells['J' + r] = d[5];
});

var html = '<colgroup><col style="width:26px">';
cols.forEach(function(c) {
	html += c[1] ? '<col style="width:' + c[1] + 'px">' : '<col>';
});
html += '</colgroup><thead><tr><th class="corner"></th>';
cols.forEach(function(c) {
	html += '<th' + (c[0] === active.charAt(0) ? ' class="on"' : '') + '>' + c[0] + '</th>';
});
html += '</tr></thead><tbody>';
for (var r = 1; r <= rows; r++) {
	html += '<tr><th' + (r === 9 ? ' class="on"' : '') + '>' + r + '</th>';
	cols.forEach(function(c) {
		var key = c[0] + r;
		var text = c[0] && cells[key] || '';
		var cls = key === active ? 'cursor' : /^[\d\/]+$/.test(text) ? 'num' : '';
		html += '<td' + (cls ? ' class="' + cls + '"' : '') + '>' + text + '</td>';
	});
	html += '</tr>';
}
document.querySelector('.grid').innerHTML = html + '</tbody>';
```
